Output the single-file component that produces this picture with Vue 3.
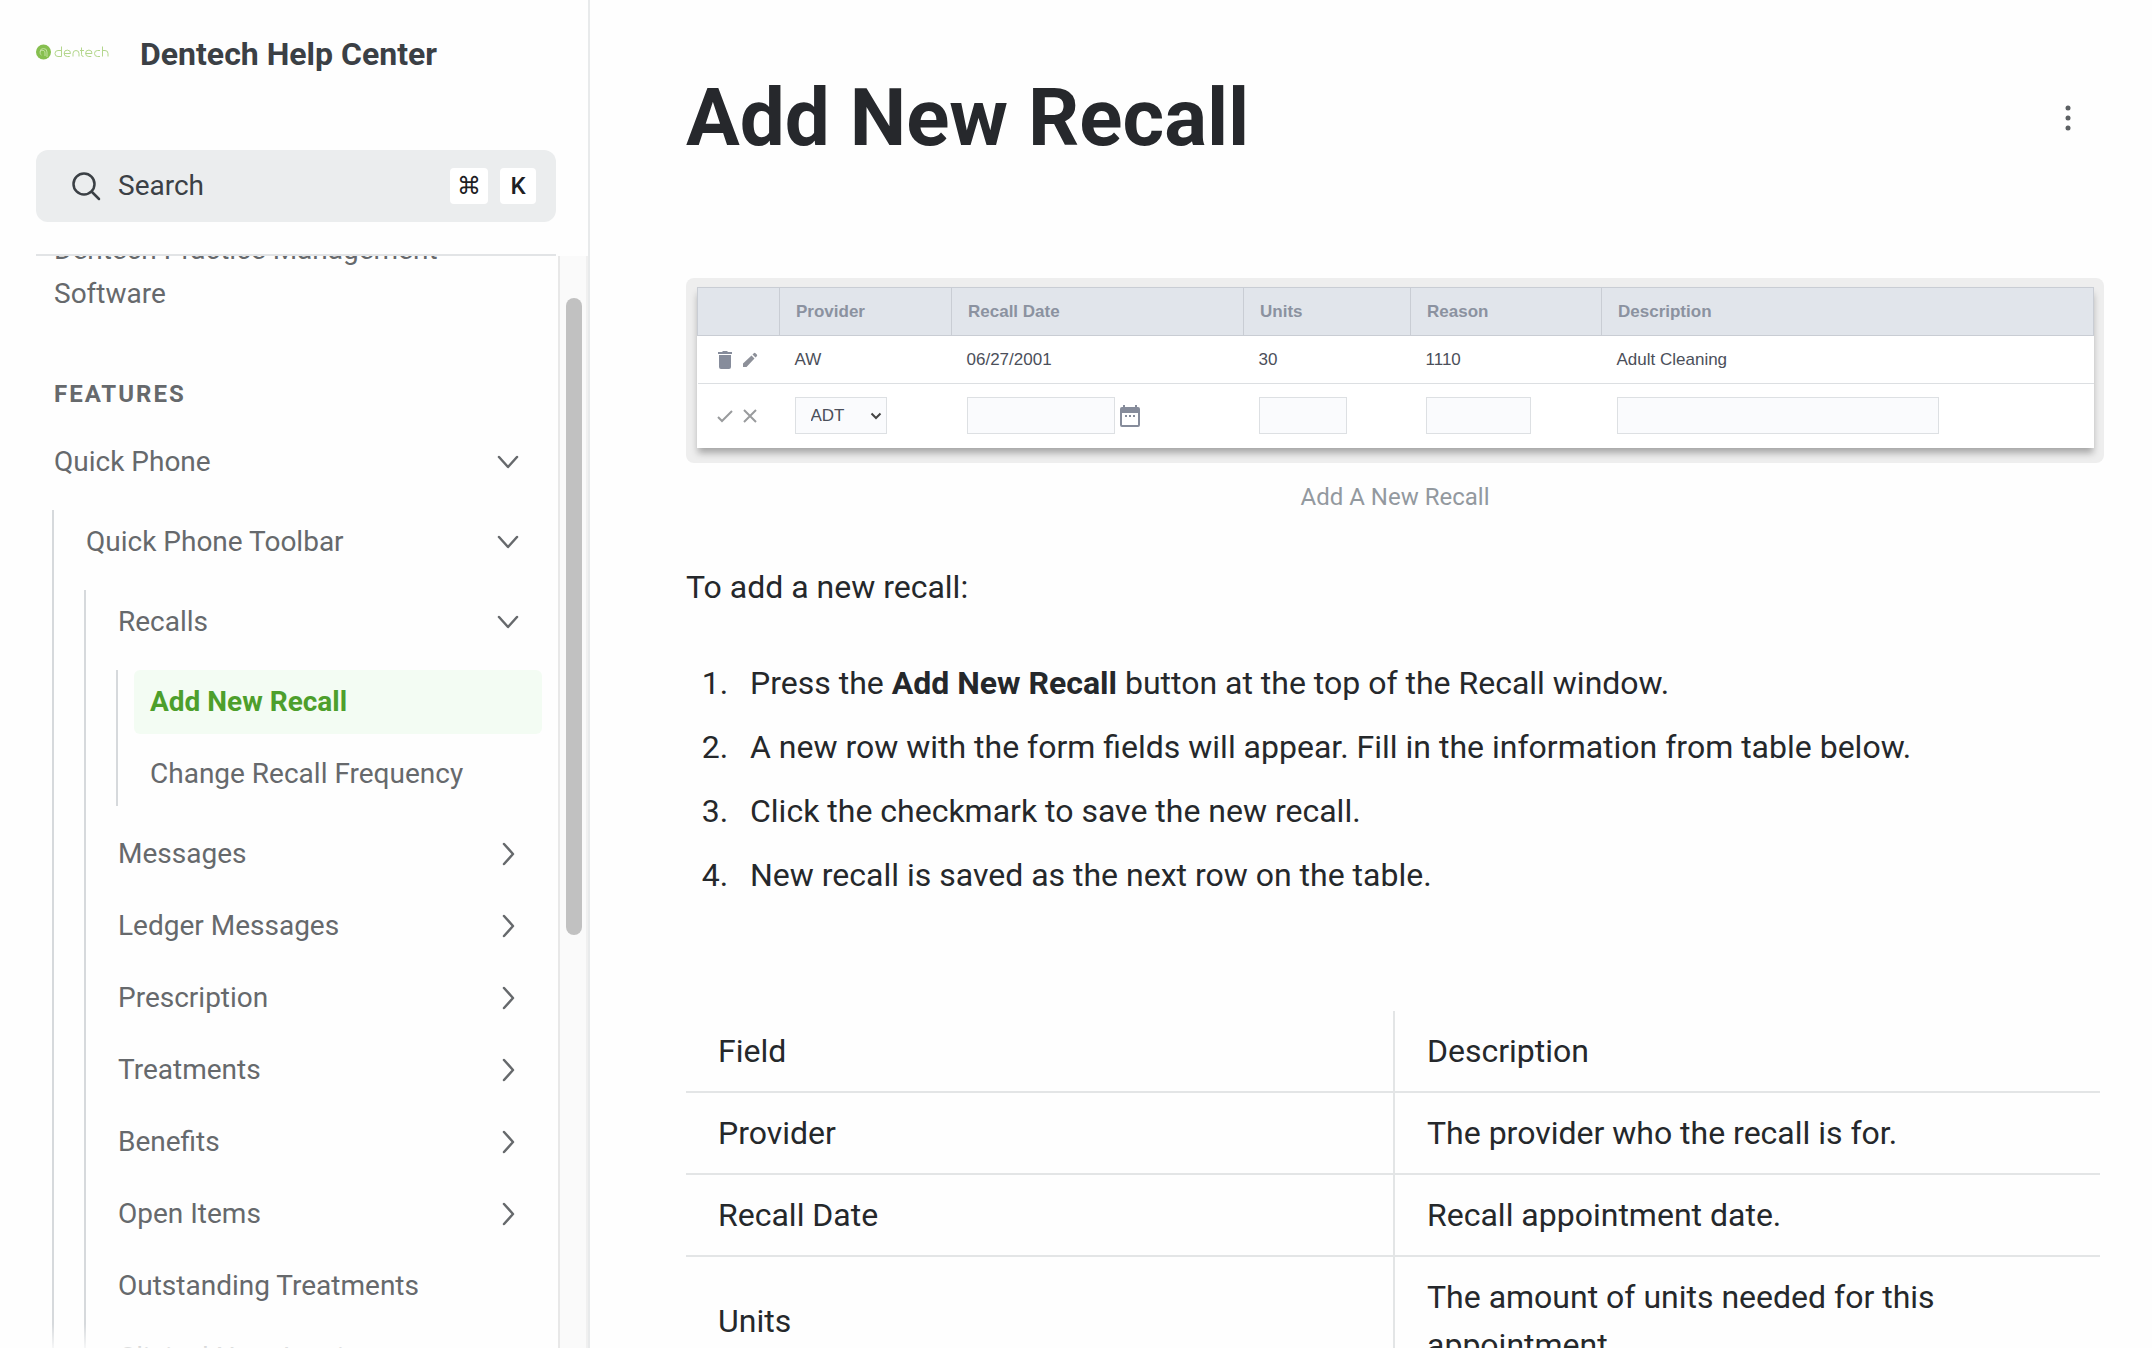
<script setup>
const chevronDown = 'M8 13l9 10 9-10'
const chevronRight = 'M13 8l9 10-9 10'
const collapsed = ['Messages', 'Ledger Messages', 'Prescription', 'Treatments', 'Benefits', 'Open Items']
const fields = [
  { name: 'Provider', text: 'The provider who the recall is for.' },
  { name: 'Recall Date', text: 'Recall appointment date.' },
  { name: 'Units', text: 'The amount of units needed for this appointment.' },
]
</script>

<template>
  <div class="page">
    <aside class="sidebar">
      <header class="brand">
        <svg class="logo" width="74" height="24" viewBox="0 0 74 24" aria-hidden="true">
          <circle cx="7.500" cy="10" r="7.500" fill="#86bf4f" />
          <path d="M4 10a3.500 3.500 0 1 1 7 0v5M5.500 13a2.500 2.500 0 1 1 3.500-2v3" fill="none" stroke="#c3e2a2" stroke-width="1" />
          <g fill="none" stroke="#b3d68c" stroke-width="1">
            <path d="M25.500 4.500v10M25.500 14.500H22a3 3 0 0 1 0-6h3.500" />
            <path d="M28 11.500h6.500a3.200 3.200 0 1 0-3.200 3h2.500" />
            <path d="M37 14.500v-3a3 3 0 0 1 6 0v3" />
            <path d="M45.500 5.500v7a2 2 0 0 0 2 2M44 8.500h4" />
            <path d="M49.500 11.500H56a3.200 3.200 0 1 0-3.200 3h2.500" />
            <path d="M64 8.500h-2.500a3 3 0 0 0 0 6H64" />
            <path d="M66.500 4.500v10M66.500 8.500H69a3 3 0 0 1 3 3v3" />
          </g>
        </svg>
        <a class="brand-name" href="#">Dentech Help Center</a>
      </header>

      <button class="search" type="button">
        <svg width="30" height="30" viewBox="0 0 30 30" fill="none" stroke="currentColor" stroke-width="2.500" stroke-linecap="round" aria-hidden="true">
          <circle cx="12" cy="13" r="10.500" /><path d="M20 21l7 7" />
        </svg>
        <span class="search-text">Search</span>
        <kbd>⌘</kbd>
        <kbd>K</kbd>
      </button>

      <div class="scroller">
        <nav class="nav">
          <a class="item wrapped" href="#">Dentech Practice Management Software</a>
          <h2 class="group">Features</h2>
          <ul class="tree">
            <li>
              <a class="item" href="#">Quick Phone<svg class="chevron" viewBox="0 0 34 36"><path :d="chevronDown" /></svg></a>
              <ul class="branch">
                <li>
                  <a class="item" href="#">Quick Phone Toolbar<svg class="chevron" viewBox="0 0 34 36"><path :d="chevronDown" /></svg></a>
                  <ul class="branch">
                    <li>
                      <a class="item" href="#">Recalls<svg class="chevron" viewBox="0 0 34 36"><path :d="chevronDown" /></svg></a>
                      <ul class="branch">
                        <li><a class="item active" href="#" aria-current="page">Add New Recall</a></li>
                        <li><a class="item" href="#">Change Recall Frequency</a></li>
                      </ul>
                    </li>
                    <li v-for="label in collapsed" :key="label">
                      <a class="item" href="#">{{ label }}<svg class="chevron" viewBox="0 0 34 36"><path :d="chevronRight" /></svg></a>
                    </li>
                    <li><a class="item" href="#">Outstanding Treatments</a></li>
                    <li><a class="item" href="#">Clinical Note Inquiry</a></li>
                  </ul>
                </li>
              </ul>
            </li>
          </ul>
        </nav>
        <div class="track"><div class="thumb"></div></div>
        <div class="fade"></div>
      </div>
    </aside>

    <main class="content">
      <div class="heading">
        <h1>Add New Recall</h1>
        <button class="more" type="button" aria-label="More options">
          <svg width="8" height="28" viewBox="0 0 8 28" fill="#5c6063"><circle cx="4" cy="4" r="2.500" /><circle cx="4" cy="14" r="2.500" /><circle cx="4" cy="24" r="2.500" /></svg>
        </button>
      </div>

      <figure>
        <div class="frame">
          <table class="recalls">
            <colgroup>
              <col class="c-actions" /><col class="c-provider" /><col class="c-date" /><col class="c-units" /><col class="c-reason" /><col />
            </colgroup>
            <thead>
              <tr><th></th><th>Provider</th><th>Recall Date</th><th>Units</th><th>Reason</th><th>Description</th></tr>
            </thead>
            <tbody>
              <tr class="saved">
                <td>
                  <div class="actions">
                    <button type="button" aria-label="Delete"><svg width="16" height="18" viewBox="0 0 16 18" fill="#868c9b"><path d="M1 1h4l1-1h4l1 1h4v2H1zM2 4h12v12a2 2 0 0 1-2 2H4a2 2 0 0 1-2-2z" /></svg></button>
                    <button type="button" aria-label="Edit"><svg width="16" height="16" viewBox="0 0 16 16" fill="#8d9099"><path d="M1 15v-3.500L9.500 3.500 12.500 6.500 4.500 15zM10.500 2.500l1.300-1.300a1.200 1.200 0 0 1 1.700 0l1.300 1.300a1.200 1.200 0 0 1 0 1.700L13.500 5.500z" /></svg></button>
                  </div>
                </td>
                <td>AW</td><td>06/27/2001</td><td>30</td><td>1110</td><td>Adult Cleaning</td>
              </tr>
              <tr class="draft">
                <td>
                  <div class="actions">
                    <button type="button" aria-label="Save"><svg width="16" height="16" viewBox="0 0 16 16" fill="none" stroke="#999b9d" stroke-width="2"><path d="M1 9l4 4L15 3" /></svg></button>
                    <button type="button" aria-label="Cancel"><svg width="16" height="16" viewBox="0 0 16 16" fill="none" stroke="#999b9d" stroke-width="2"><path d="M2 2l12 12M14 2L2 14" /></svg></button>
                  </div>
                </td>
                <td>
                  <div class="select">
                    <select aria-label="Provider"><option>ADT</option></select>
                    <svg width="12" height="8" viewBox="0 0 12 8" fill="none" stroke="#444" stroke-width="2"><path d="M1.500 1.500L6 6l4.500-4.500" /></svg>
                  </div>
                </td>
                <td>
                  <div class="date">
                    <input class="w-date" type="text" aria-label="Recall Date" />
                    <svg width="20" height="22" viewBox="0 0 20 22" fill="#868c9b"><path fill-rule="evenodd" d="M3 0h2v2h10V0h2v2h1a2 2 0 0 1 2 2v16a2 2 0 0 1-2 2H2a2 2 0 0 1-2-2V4a2 2 0 0 1 2-2h1zM2 8v12h16V8zM5 10h2v2H5zM9 10h2v2H9zM13 10h2v2h-2z" /></svg>
                  </div>
                </td>
                <td><input class="w-units" type="text" aria-label="Units" /></td>
                <td><input class="w-reason" type="text" aria-label="Reason" /></td>
                <td><input class="w-description" type="text" aria-label="Description" /></td>
              </tr>
            </tbody>
          </table>
        </div>
        <figcaption>Add A New Recall</figcaption>
      </figure>

      <p>To add a new recall:</p>
      <ol>
        <li>Press the <strong>Add New Recall</strong> button at the top of the Recall window.</li>
        <li>A new row with the form fields will appear. Fill in the information from table below.</li>
        <li>Click the checkmark to save the new recall.</li>
        <li>New recall is saved as the next row on the table.</li>
      </ol>

      <div class="table-wrap">
        <table class="fields">
          <thead>
            <tr><th>Field</th><th>Description</th></tr>
          </thead>
          <tbody>
            <tr v-for="row in fields" :key="row.name"><td>{{ row.name }}</td><td>{{ row.text }}</td></tr>
          </tbody>
        </table>
      </div>
    </main>
  </div>
</template>

<style>
body {
  margin: 0;
  background: #fefefe;
}
</style>

<style scoped>
* {
  box-sizing: border-box;
}
.page {
  display: flex;
  height: 100vh;
  overflow: hidden;
  font-family: Roboto, "Liberation Sans", sans-serif;
  color: #25282b;
}
a {
  color: inherit;
  text-decoration: none;
}
button {
  font: inherit;
  border: 0;
  background: none;
  padding: 0;
  color: inherit;
}
ul,
ol {
  list-style: none;
  margin: 0;
  padding: 0;
}
.sidebar {
  flex: 0 0 590px;
  display: flex;
  flex-direction: column;
  border-right: 2px solid #e8eaeb;
}
.brand {
  display: flex;
  align-items: center;
  gap: 30px;
  height: 108px;
  padding-left: 36px;
}
.brand-name {
  font-size: 32px;
  font-weight: 700;
  line-height: 40px;
  color: #3b4045;
}
.search {
  display: flex;
  align-items: center;
  height: 72px;
  margin: 42px 32px 32px 36px;
  padding: 0 20px 0 36px;
  border-radius: 12px;
  background: #ebedee;
  color: #3b4045;
  font-size: 28px;
  line-height: 32px;
  text-align: left;
}
.search-text {
  flex: 1;
  margin-left: 16px;
}
kbd {
  min-width: 36px;
  height: 36px;
  margin-left: 12px;
  padding: 0 7px;
  border-radius: 4px;
  background: #fff;
  color: #1d2023;
  font-family: Roboto, "DejaVu Sans", sans-serif;
  font-size: 24px;
  font-weight: 500;
  line-height: 36px;
  text-align: center;
}
.scroller {
  position: relative;
  flex: 1;
  min-height: 0;
  display: flex;
}
.nav {
  flex: 1;
  margin-left: 36px;
  padding: 0 14px 0 2px;
  border-top: 2px solid #e2e4e6;
  overflow: hidden;
  display: flex;
  flex-direction: column;
}
.nav > * {
  flex-shrink: 0;
}
.track {
  width: 30px;
  margin: 2px 0 0 2px;
  padding: 42px 6px 0;
  border-left: 2px solid #e8e8e8;
  border-right: 2px solid #f0f0f0;
  background: #fafafa;
}
.thumb {
  width: 16px;
  height: 637px;
  border-radius: 8px;
  background: #c1c1c1;
}
.fade {
  position: absolute;
  left: 0;
  right: 32px;
  bottom: 0;
  height: 24px;
  background: linear-gradient(#fefefe00, #fefefecc);
}
.item {
  display: flex;
  align-items: center;
  justify-content: space-between;
  height: 64px;
  padding: 0 16px;
  border-radius: 6px;
  font-size: 28px;
  line-height: 44px;
  color: #66696c;
}
.item.wrapped {
  display: block;
  height: auto;
  width: 440px;
  margin-top: -28px;
}
.item.active {
  background: #f3fcf3;
  color: #4d9f2c;
  font-weight: 700;
}
.chevron {
  width: 36px;
  height: 36px;
  fill: none;
  stroke: currentColor;
  stroke-width: 2.5;
  stroke-linecap: round;
  stroke-linejoin: round;
}
.group {
  margin: 62px 0 20px;
  padding: 0 16px;
  font-size: 24px;
  font-weight: 700;
  line-height: 32px;
  letter-spacing: 2px;
  text-transform: uppercase;
  color: #66696c;
}
.tree,
.branch {
  display: flex;
  flex-direction: column;
  gap: 8px;
}
.branch {
  margin: 16px 0 8px 14px;
  padding-left: 16px;
  border-left: 2px solid #d6d9dc;
}
.content {
  flex: 1;
  min-width: 0;
  padding: 68px 48px 0 96px;
}
.heading {
  display: flex;
  align-items: center;
  justify-content: space-between;
  height: 100px;
}
h1 {
  margin: 0;
  font-size: 80px;
  font-weight: 700;
  line-height: 100px;
  color: #26282c;
}
.more {
  display: flex;
  padding: 0 32px;
}
figure {
  margin: 110px 0 0;
}
.frame {
  padding: 9px 10px 15px 11px;
  border-radius: 8px;
  background: #eeeeee;
}
.recalls {
  width: 100%;
  table-layout: fixed;
  border-collapse: collapse;
  background: #fff;
  box-shadow: 0 6px 7px -1px #0000004d;
  font-family: "Liberation Sans", Arial, sans-serif;
  font-size: 17px;
  color: #4b4f5a;
}
.c-actions { width: 82px; }
.c-provider { width: 172px; }
.c-date { width: 292px; }
.c-units { width: 167px; }
.c-reason { width: 191px; }
.recalls th {
  height: 48px;
  padding: 0 16px;
  border: 1px solid #c9cdd4;
  background: #e1e5eb;
  color: #8b92a0;
  font-size: 17px;
  text-align: left;
}
.recalls td {
  padding: 0 15px;
}
.saved td {
  height: 48px;
  border-bottom: 1px solid #dcdfe2;
}
.draft td {
  height: 64px;
}
.actions {
  display: flex;
  align-items: center;
  gap: 9px;
  margin-left: 4px;
}
.actions button {
  display: flex;
}
.recalls input,
.recalls select {
  display: block;
  height: 37px;
  margin: 0;
  border: 1px solid #dde0e3;
  border-radius: 0;
  background: #fafbfd;
  font: inherit;
  color: inherit;
}
.recalls select {
  width: 92px;
  padding: 0 15px;
  appearance: none;
}
.select {
  position: relative;
  width: 92px;
}
.select svg {
  position: absolute;
  right: 5px;
  top: 15px;
}
.date {
  display: flex;
  align-items: center;
  gap: 5px;
}
.w-date { width: 148px; }
.w-units { width: 88px; }
.w-reason { width: 105px; }
.w-description { width: 322px; }
figcaption {
  margin-top: 18px;
  font-size: 24px;
  line-height: 32px;
  text-align: center;
  color: #93999f;
}
p {
  margin: 50px 0 0;
  font-size: 32px;
  line-height: 48px;
}
ol {
  display: flex;
  flex-direction: column;
  gap: 16px;
  margin-top: 48px;
  padding-left: 58px;
  list-style: decimal;
  font-size: 32px;
  line-height: 48px;
}
ol li {
  padding-left: 6px;
}
ol li::marker {
  content: counter(list-item) ".\00a0\00a0";
}
.table-wrap {
  margin-top: 112px;
  padding-right: 4px;
}
.fields {
  width: 100%;
  table-layout: fixed;
  border-collapse: separate;
  border-spacing: 0;
  font-size: 32px;
  line-height: 48px;
}
.fields th,
.fields td {
  padding: 16px 32px;
  border-bottom: 2px solid #e3e5e6;
  font-weight: 400;
  text-align: left;
  vertical-align: middle;
}
.fields th + th,
.fields td + td {
  border-left: 2px solid #e3e5e6;
}
</style>
